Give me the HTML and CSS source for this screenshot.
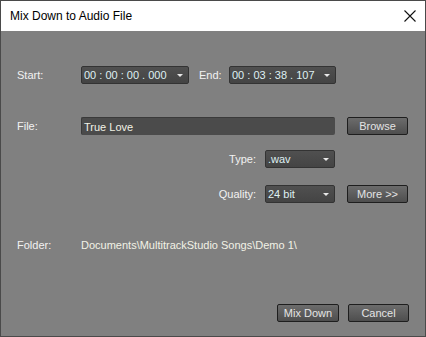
FILE: index.html
```html
<!DOCTYPE html>
<html lang="en">
<head>
  <meta charset="UTF-8" />
  <title>Mix Down to Audio File</title>
  <link rel="stylesheet" href="styles.css">
</head>
<body>

<div class="window">
  <div class="titlebar">
    <span class="title">Mix Down to Audio File</span>
    <svg class="close" width="12" height="12" viewBox="0 0 12 12">
      <path d="M0.5 0.5 L11.5 11.5 M11.5 0.5 L0.5 11.5" stroke="#111" stroke-width="1.1" fill="none"/>
    </svg>
  </div>

  <div class="content">
    <div class="row row-time">
      <span class="lbl">Start:</span>
      <div class="combo combo-time"><span>00 : 00 : 00 . 000</span><i class="arrow"></i></div>
      <span class="lbl lbl-end">End:</span>
      <div class="combo combo-time end"><span>00 : 03 : 38 . 107</span><i class="arrow"></i></div>
    </div>

    <div class="row row-file">
      <span class="lbl">File:</span>
      <div class="field">True Love</div>
      <button class="btn">Browse</button>
    </div>

    <div class="row row-type">
      <span class="lbl lbl-right">Type:</span>
      <div class="combo combo-small"><span>.wav</span><i class="arrow"></i></div>
    </div>

    <div class="row row-quality">
      <span class="lbl lbl-right">Quality:</span>
      <div class="combo combo-small"><span>24 bit</span><i class="arrow"></i></div>
      <button class="btn">More &gt;&gt;</button>
    </div>

    <div class="row row-folder">
      <span class="lbl">Folder:</span>
      <span class="path">Documents\MultitrackStudio Songs\Demo 1\</span>
    </div>

    <div class="footer">
      <button class="btn">Mix Down</button>
      <button class="btn">Cancel</button>
    </div>
  </div>
</div>

</body>
</html>
```

FILE: styles.css
```css
html, body {
  margin: 0; padding: 0;
  width: 426px; height: 337px;
  overflow: hidden;
  background: #808080;
}
.window {
  width: 426px; height: 337px;
  box-sizing: border-box;
  border: 1px solid #4a4a4a;
  display: flex;
  flex-direction: column;
  font-family: "Liberation Sans", Arial, sans-serif;
}
.titlebar {
  height: 30px;
  background: #fff;
  display: flex;
  align-items: center;
  justify-content: space-between;
  padding: 0 9px 0 9px;
  flex-shrink: 0;
}
.title {
  font-size: 12px;
  color: #000;
  margin-top: -1px;
}

.content {
  flex: 1;
  background: #808080;
  display: flex;
  flex-direction: column;
  padding: 35px 0 14px 16px;
  font-size: 11px;
  color: #f2f2f2;
}
.row {
  display: flex;
  align-items: center;
  height: 18px;
}
.lbl { width: 64px; flex-shrink: 0; }
.lbl-end { width: 30px; margin-left: 10px; }
.lbl-right {
  width: 248px;
  text-align: right;
  padding-right: 9px;
  box-sizing: border-box;
}

.combo {
  height: 18px;
  box-sizing: border-box;
  border: 1px solid #333;
  border-radius: 2px;
  background: linear-gradient(#505050, #444);
  display: flex;
  align-items: center;
  justify-content: space-between;
  padding: 0 5px 0 2px;
  color: #dff0f2;
}
.combo-time { width: 108px; }
.combo-time.end { width: 107px; }
.combo-small { width: 70px; }
.arrow {
  width: 0; height: 0;
  border-left: 3px solid transparent;
  border-right: 3px solid transparent;
  border-top: 3px solid #e8e8e8;
}

.field {
  width: 254px;
  height: 18px;
  box-sizing: border-box;
  background: #4b4b4b;
  border-top: 1px solid #3a3a3a;
  border-left: 1px solid #3a3a3a;
  border-radius: 2px;
  padding: 0 2px;
  display: flex;
  align-items: center;
  color: #f2f2e6;
}

.btn {
  width: 61px;
  height: 18px;
  box-sizing: border-box;
  border: 1px solid #1e1e1e;
  border-radius: 2px;
  background: linear-gradient(#6c6c6c, #4e4e4e);
  color: #e4e4e4;
  font-family: "Liberation Sans", Arial, sans-serif;
  font-size: 11px;
  padding: 0;
  margin-left: 12px;
}

.row-file { margin-top: 33px; }
.row-type { margin-top: 15px; }
.row-quality { margin-top: 17px; }
.row-folder { margin-top: 33px; }
.path { color: #f2f2e6; }

.footer {
  margin-top: auto;
  display: flex;
  justify-content: flex-end;
  padding-right: 16px;
}
.footer .btn { margin-left: 9px; width: 62px; }
.footer .btn + .btn { width: 61px; }
```
